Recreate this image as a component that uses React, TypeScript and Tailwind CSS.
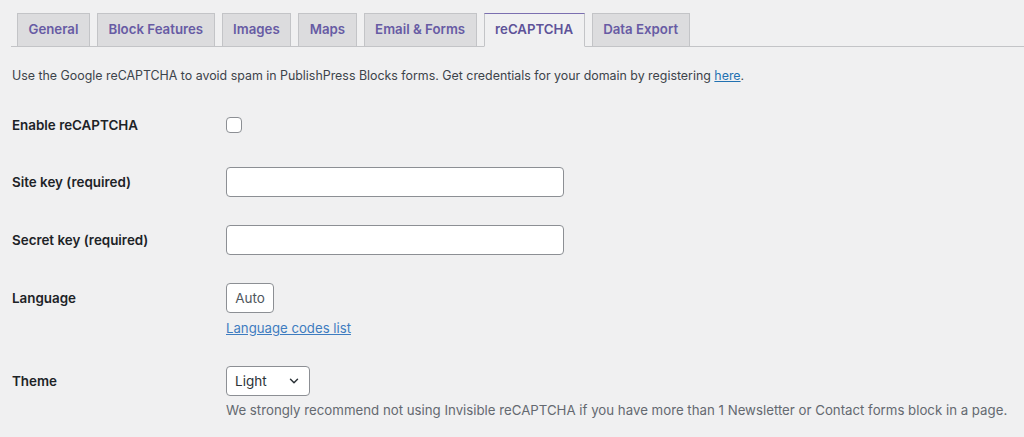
import { ChevronDown } from 'lucide-react';

const tabs = ['General', 'Block Features', 'Images', 'Maps', 'Email & Forms', 'reCAPTCHA', 'Data Export'];
const active = 'reCAPTCHA';

function Row({ label, tight, children }: { label: string; tight?: boolean; children: React.ReactNode }) {
  return (
    <div className={tight ? 'flex h-[28px] items-center' : 'flex'}>
      <div className="w-[214px] h-[30px] flex items-center text-[13.4px] font-semibold text-[#1d2327]">{label}</div>
      <div className="flex flex-col">{children}</div>
    </div>
  );
}

export default function App() {
  return (
    <div className="min-h-[437px] bg-[#f0f0f1] pl-[12px] font-['Inter',sans-serif] text-[#3c434a]">
      {/* Tabs */}
      <div className="flex gap-[7px] pt-[13px] pl-[6px] -ml-px border-b border-[#c3c4c7]">
        {tabs.map(t => (
          <div
            key={t}
            className={
              t === active
                ? 'h-[34px] -mb-px px-[10.5px] flex items-center bg-[#f0f0f1] border border-[#c3c4c7] border-t-[#7b6fb0] border-b-[#f0f0f1] text-[13.25px] font-semibold text-[#5e5399]'
                : 'h-[33px] px-[10.5px] flex items-center bg-[#dcdcde] border border-b-0 border-[#c3c4c7] text-[13.25px] font-semibold text-[#675ba4]'
            }
          >
            {t}
          </div>
        ))}
      </div>

      {/* Description */}
      <p className="mt-[19px] text-[12.4px] leading-[20px] text-[#3c434a]">
        Use the Google reCAPTCHA to avoid spam in PublishPress Blocks forms. Get credentials for your domain by registering{' '}
        <a href="#" className="text-[#2271b1] underline">here</a>.
      </p>

      {/* Settings */}
      <div className="mt-[25px] flex flex-col gap-[28px]">
        <Row label="Enable reCAPTCHA" tight>
          <div className="h-[28px] flex items-center">
            <span className="w-[16px] h-[16px] rounded-[4px] border border-[#8c8f94] bg-white" />
          </div>
        </Row>
        <Row label="Site key (required)">
          <input className="w-[338px] h-[30px] rounded-[4px] border border-[#8c8f94] bg-white px-2 text-[14px] outline-none" />
        </Row>
        <Row label="Secret key (required)">
          <input className="w-[338px] h-[30px] rounded-[4px] border border-[#8c8f94] bg-white px-2 text-[14px] outline-none" />
        </Row>
        <Row label="Language">
          <div className="w-[48px] h-[30px] rounded-[4px] border border-[#8c8f94] bg-white flex items-center justify-center text-[13.5px] text-[#50575e]">
            Auto
          </div>
          <a href="#" className="mt-[5px] text-[13.2px] leading-[20px] text-[#3e7cc0] underline">Language codes list</a>
        </Row>
        <Row label="Theme">
          <div className="w-[84px] h-[30px] rounded-[4px] border border-[#8c8f94] bg-white flex items-center justify-between pl-[8px] pr-[8px] text-[13.5px] text-[#2c3338]">
            <span>Light</span>
            <ChevronDown className="w-[14px] h-[14px] text-[#2c3338]" strokeWidth={2.5} />
          </div>
          <p className="mt-[4px] text-[13.25px] leading-[20px] text-[#646970]">
            We strongly recommend not using Invisible reCAPTCHA if you have more than 1 Newsletter or Contact forms block in a page.
          </p>
        </Row>
      </div>
    </div>
  );
}
